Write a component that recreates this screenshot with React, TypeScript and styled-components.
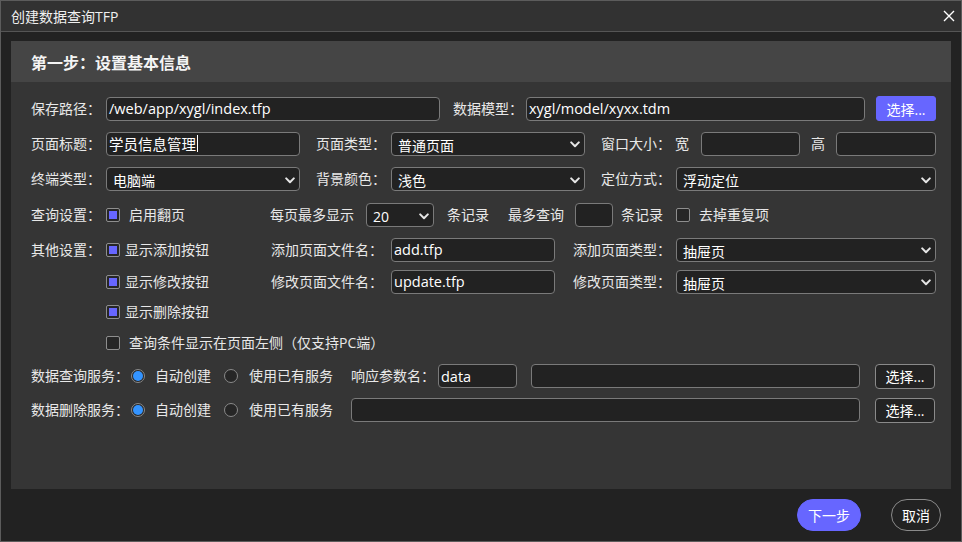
import React from "react";
import styled, { createGlobalStyle } from "styled-components";

const GlobalStyle = createGlobalStyle`
  html, body { margin: 0; padding: 0; background: #222; }
  * { box-sizing: border-box; }
  body {
    font-family: "Open Sans", "Noto Sans CJK SC", sans-serif;
    font-size: 14px;
    color: #eaeaea;
  }
`;

const Window = styled.div`
  width: 962px;
  height: 542px;
  border: 1px solid #5c5c5c;
  background: #222;
  display: flex;
  flex-direction: column;
`;

const TitleBar = styled.div`
  height: 31px;
  flex-shrink: 0;
  background: #323232;
  border-bottom: 1px solid #555;
  display: flex;
  align-items: center;
  justify-content: space-between;
  padding: 0 5px 0 10px;
  font-size: 14px;
  color: #f0f0f0;
`;

const CloseBtn = styled.span`
  display: flex;
  align-items: center;
  justify-content: center;
  width: 14px;
  height: 14px;
`;

const Content = styled.div`
  flex: 1;
  display: flex;
  flex-direction: column;
  padding: 9px 10px 0 10px;
  min-height: 0;
`;

const Panel = styled.div`
  height: 448px;
  flex-shrink: 0;
  background: #353535;
  display: flex;
  flex-direction: column;
`;

const PanelHeader = styled.div`
  height: 41px;
  background: #454545;
  display: flex;
  align-items: center;
  padding-left: 20px;
  font-size: 16px;
  font-weight: 700;
  color: #f4f4f4;
`;

const PanelBody = styled.div`
  display: flex;
  flex-direction: column;
  padding: 9px 15px 0 20px;
`;

const Row = styled.div<{ $h: number }>`
  display: flex;
  align-items: center;
  height: ${(p) => p.$h}px;
`;

const Text = styled.span<{ $w?: number; $ml?: number }>`
  flex-shrink: 0;
  white-space: nowrap;
  line-height: 20px;
  color: #e8e8e8;
  ${(p) => (p.$w !== undefined ? `width: ${p.$w}px;` : "")}
  margin-left: ${(p) => p.$ml ?? 0}px;
`;

const TextBox = styled.div<{ $w: number; $ml?: number }>`
  flex-shrink: 0;
  width: ${(p) => p.$w}px;
  height: 24px;
  margin-left: ${(p) => p.$ml ?? 0}px;
  background: #222;
  border: 1px solid #7a7a7a;
  border-radius: 4px;
  padding: 0 3px 0 2px;
  display: flex;
  align-items: center;
  font-size: 14.5px;
  color: #fff;
  white-space: nowrap;
  overflow: hidden;
`;

const Caret = styled.span`
  display: inline-block;
  width: 1px;
  height: 17px;
  background: #fff;
  margin-left: 1px;
`;

const SelectBox = styled.div<{ $w: number; $ml?: number }>`
  flex-shrink: 0;
  width: ${(p) => p.$w}px;
  height: 24px;
  margin-left: ${(p) => p.$ml ?? 0}px;
  background: #222;
  border: 1px solid #7a7a7a;
  border-radius: 4px;
  padding: 2px 4px 0 6px;
  display: flex;
  align-items: center;
  justify-content: space-between;
  color: #fff;
  font-size: 14px;
  white-space: nowrap;
`;

const Btn = styled.button<{ $primary?: boolean; $ml?: number }>`
  flex-shrink: 0;
  width: 60px;
  height: 25px;
  margin-left: ${(p) => p.$ml ?? 0}px;
  border-radius: ${(p) => (p.$primary ? 3 : 4)}px;
  border: 1px solid ${(p) => (p.$primary ? "#6766ff" : "#8a8a8a")};
  background: ${(p) => (p.$primary ? "#6766ff" : "#232323")};
  color: #fff;
  font-family: inherit;
  font-size: 14px;
  padding: 0;
  display: flex;
  align-items: center;
  justify-content: center;
  cursor: pointer;
`;

const CheckBox = styled.span<{ $checked?: boolean }>`
  flex-shrink: 0;
  width: 14px;
  height: 14px;
  border: 1px solid #8e8e8e;
  border-radius: 2px;
  background: #262626;
  padding: 2px;
  display: flex;
  &::after {
    content: "";
    flex: 1;
    background: ${(p) => (p.$checked ? "#6766ff" : "transparent")};
  }
`;

const CheckGroup = styled.div<{ $w?: number }>`
  flex-shrink: 0;
  display: flex;
  align-items: center;
  ${(p) => (p.$w !== undefined ? `width: ${p.$w}px;` : "")}
`;

const Radio = styled.span<{ $checked?: boolean }>`
  flex-shrink: 0;
  width: 14px;
  height: 14px;
  border-radius: 50%;
  border: 1px solid #8a8a8a;
  background: #262626;
  padding: 1px;
  display: flex;
  &::after {
    content: "";
    flex: 1;
    border-radius: 50%;
    background: ${(p) => (p.$checked ? "#3494ff" : "transparent")};
  }
`;

const Footer = styled.div`
  flex: 1;
  display: flex;
  justify-content: flex-end;
  align-items: flex-start;
  gap: 30px;
  padding: 10px 10px 0 0;
`;

const PillBtn = styled.button<{ $primary?: boolean; $w: number }>`
  width: ${(p) => p.$w}px;
  height: 32px;
  border-radius: 16px;
  border: 1px solid ${(p) => (p.$primary ? "#6766ff" : "#8a8a8a")};
  background: ${(p) => (p.$primary ? "#6766ff" : "transparent")};
  color: #fff;
  font-family: inherit;
  font-size: 14px;
  padding: 0;
  cursor: pointer;
`;

const Chevron = () => (
  <svg width="10" height="7" viewBox="0 0 10 7" fill="none">
    <path d="M1.2 1.4L5 5.2l3.8-3.8" stroke="#e6e6e6" strokeWidth="2" strokeLinecap="round" strokeLinejoin="round" />
  </svg>
);

const Select = ({ w, ml, value }: { w: number; ml?: number; value: string }) => (
  <SelectBox $w={w} $ml={ml} role="combobox">
    <span>{value}</span>
    <Chevron />
  </SelectBox>
);

export default function App() {
  return (
    <>
      <GlobalStyle />
      <Window>
        <TitleBar>
          <span>创建数据查询TFP</span>
          <CloseBtn>
            <svg width="12" height="12" viewBox="0 0 12 12">
              <path d="M1 1l10 10M11 1L1 11" stroke="#fff" strokeWidth="1.4" />
            </svg>
          </CloseBtn>
        </TitleBar>
        <Content>
          <Panel>
            <PanelHeader>第一步：设置基本信息</PanelHeader>
            <PanelBody>
              <Row $h={35}>
                <Text $w={75}>保存路径：</Text>
                <TextBox $w={334}>/web/app/xygl/index.tfp</TextBox>
                <Text $w={73} $ml={13}>数据模型：</Text>
                <TextBox $w={339}>xygl/model/xyxx.tdm</TextBox>
                <Btn $primary $ml={11}>选择...</Btn>
              </Row>
              <Row $h={35}>
                <Text $w={75}>页面标题：</Text>
                <TextBox $w={194}>
                  学员信息管理
                  <Caret />
                </TextBox>
                <Text $w={75} $ml={16}>页面类型：</Text>
                <Select w={194} value="普通页面" />
                <Text $w={74} $ml={16}>窗口大小：</Text>
                <Text $w={26}>宽</Text>
                <TextBox $w={99} />
                <Text $w={25} $ml={11}>高</Text>
                <TextBox $w={100} />
              </Row>
              <Row $h={36}>
                <Text $w={75}>终端类型：</Text>
                <Select w={194} value="电脑端" />
                <Text $w={75} $ml={16}>背景颜色：</Text>
                <Select w={194} value="浅色" />
                <Text $w={75} $ml={16}>定位方式：</Text>
                <Select w={260} value="浮动定位" />
              </Row>
              <Row $h={36}>
                <Text $w={75}>查询设置：</Text>
                <CheckGroup $w={164}>
                  <CheckBox $checked />
                  <Text $ml={9}>启用翻页</Text>
                </CheckGroup>
                <Text $w={96}>每页最多显示</Text>
                <Select w={68} value="20" />
                <Text $w={61} $ml={13}>条记录</Text>
                <Text $w={67}>最多查询</Text>
                <TextBox $w={38} />
                <Text $w={55} $ml={8}>条记录</Text>
                <CheckGroup>
                  <CheckBox />
                  <Text $ml={9}>去掉重复项</Text>
                </CheckGroup>
              </Row>
              <Row $h={33}>
                <Text $w={75}>其他设置：</Text>
                <CheckGroup $w={165}>
                  <CheckBox $checked />
                  <Text $ml={5}>显示添加按钮</Text>
                </CheckGroup>
                <Text $w={120}>添加页面文件名：</Text>
                <TextBox $w={164}>add.tfp</TextBox>
                <Text $w={103} $ml={18}>添加页面类型：</Text>
                <Select w={260} value="抽屉页" />
              </Row>
              <Row $h={31}>
                <Text $w={75} />
                <CheckGroup $w={165}>
                  <CheckBox $checked />
                  <Text $ml={5}>显示修改按钮</Text>
                </CheckGroup>
                <Text $w={120}>修改页面文件名：</Text>
                <TextBox $w={164}>update.tfp</TextBox>
                <Text $w={103} $ml={18}>修改页面类型：</Text>
                <Select w={260} value="抽屉页" />
              </Row>
              <Row $h={30}>
                <Text $w={75} />
                <CheckGroup>
                  <CheckBox $checked />
                  <Text $ml={5}>显示删除按钮</Text>
                </CheckGroup>
              </Row>
              <Row $h={32}>
                <Text $w={75} />
                <CheckGroup>
                  <CheckBox />
                  <Text $ml={9}>查询条件显示在页面左侧（仅支持PC端）</Text>
                </CheckGroup>
              </Row>
              <Row $h={34}>
                <Text $w={100}>数据查询服务：</Text>
                <Radio $checked />
                <Text $w={69} $ml={10}>自动创建</Text>
                <Radio />
                <Text $w={102} $ml={11}>使用已有服务</Text>
                <Text $w={87}>响应参数名：</Text>
                <TextBox $w={79}>data</TextBox>
                <TextBox $w={329} $ml={14} />
                <Btn $ml={15}>选择...</Btn>
              </Row>
              <Row $h={34}>
                <Text $w={100}>数据删除服务：</Text>
                <Radio $checked />
                <Text $w={69} $ml={10}>自动创建</Text>
                <Radio />
                <Text $w={102} $ml={11}>使用已有服务</Text>
                <TextBox $w={509} />
                <Btn $ml={15}>选择...</Btn>
              </Row>
            </PanelBody>
          </Panel>
          <Footer>
            <PillBtn $primary $w={64}>下一步</PillBtn>
            <PillBtn $w={50}>取消</PillBtn>
          </Footer>
        </Content>
      </Window>
    </>
  );
}
